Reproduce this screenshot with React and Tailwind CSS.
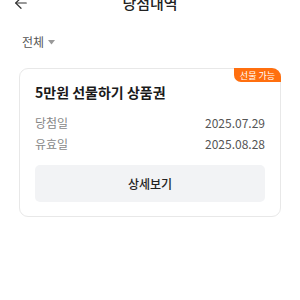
import { ArrowLeft } from 'lucide-react'

const font = { fontFamily: '"Noto Sans CJK KR", "Noto Sans", sans-serif' }

export default function App() {
  return (
    <div className="w-[300px] h-[300px] bg-white overflow-hidden" style={font}>
      {/* header, partially scrolled out of view */}
      <div className="relative flex items-center justify-center h-[20px] -mt-[7px]">
        <ArrowLeft size={18} strokeWidth={1.6} className="absolute left-[12px] text-[#333]" />
        <span className="text-[15px] font-medium text-[#222]">당첨내역</span>
      </div>

      <div className="flex items-center gap-[4px] pl-[22px] mt-[20px] h-[18px]">
        <span className="text-[12px] text-[#555]">전체</span>
        <svg width="7" height="5" viewBox="0 0 7 5" className="mt-[1px]">
          <path d="M0 0 L7 0 L3.5 4.5 Z" fill="#999" />
        </svg>
      </div>

      <div className="relative mx-[19px] mt-[17px] rounded-[9px] border border-[#e8e8e8] px-[15px] pt-[13px] pb-[14px]">
        <div className="absolute -top-px -right-px h-[14px] px-[6px] flex items-center rounded-tr-[9px] rounded-bl-[7px] bg-[#ff6f0f] text-[9px] leading-none text-white">
          선물 가능
        </div>
        <div className="text-[14px] font-bold text-[#1a1a1a] leading-[20px]">5만원 선물하기 상품권</div>
        <div className="mt-[10px] flex justify-between text-[12px] leading-[21px]">
          <span className="text-[#888]">당첨일</span>
          <span className="text-[#555]">2025.07.29</span>
        </div>
        <div className="flex justify-between text-[12px] leading-[21px]">
          <span className="text-[#888]">유효일</span>
          <span className="text-[#555]">2025.08.28</span>
        </div>
        <button className="mt-[11px] w-full h-[37px] rounded-[5px] bg-[#f2f3f5] text-[12px] font-medium text-[#222]">
          상세보기
        </button>
      </div>
    </div>
  )
}
